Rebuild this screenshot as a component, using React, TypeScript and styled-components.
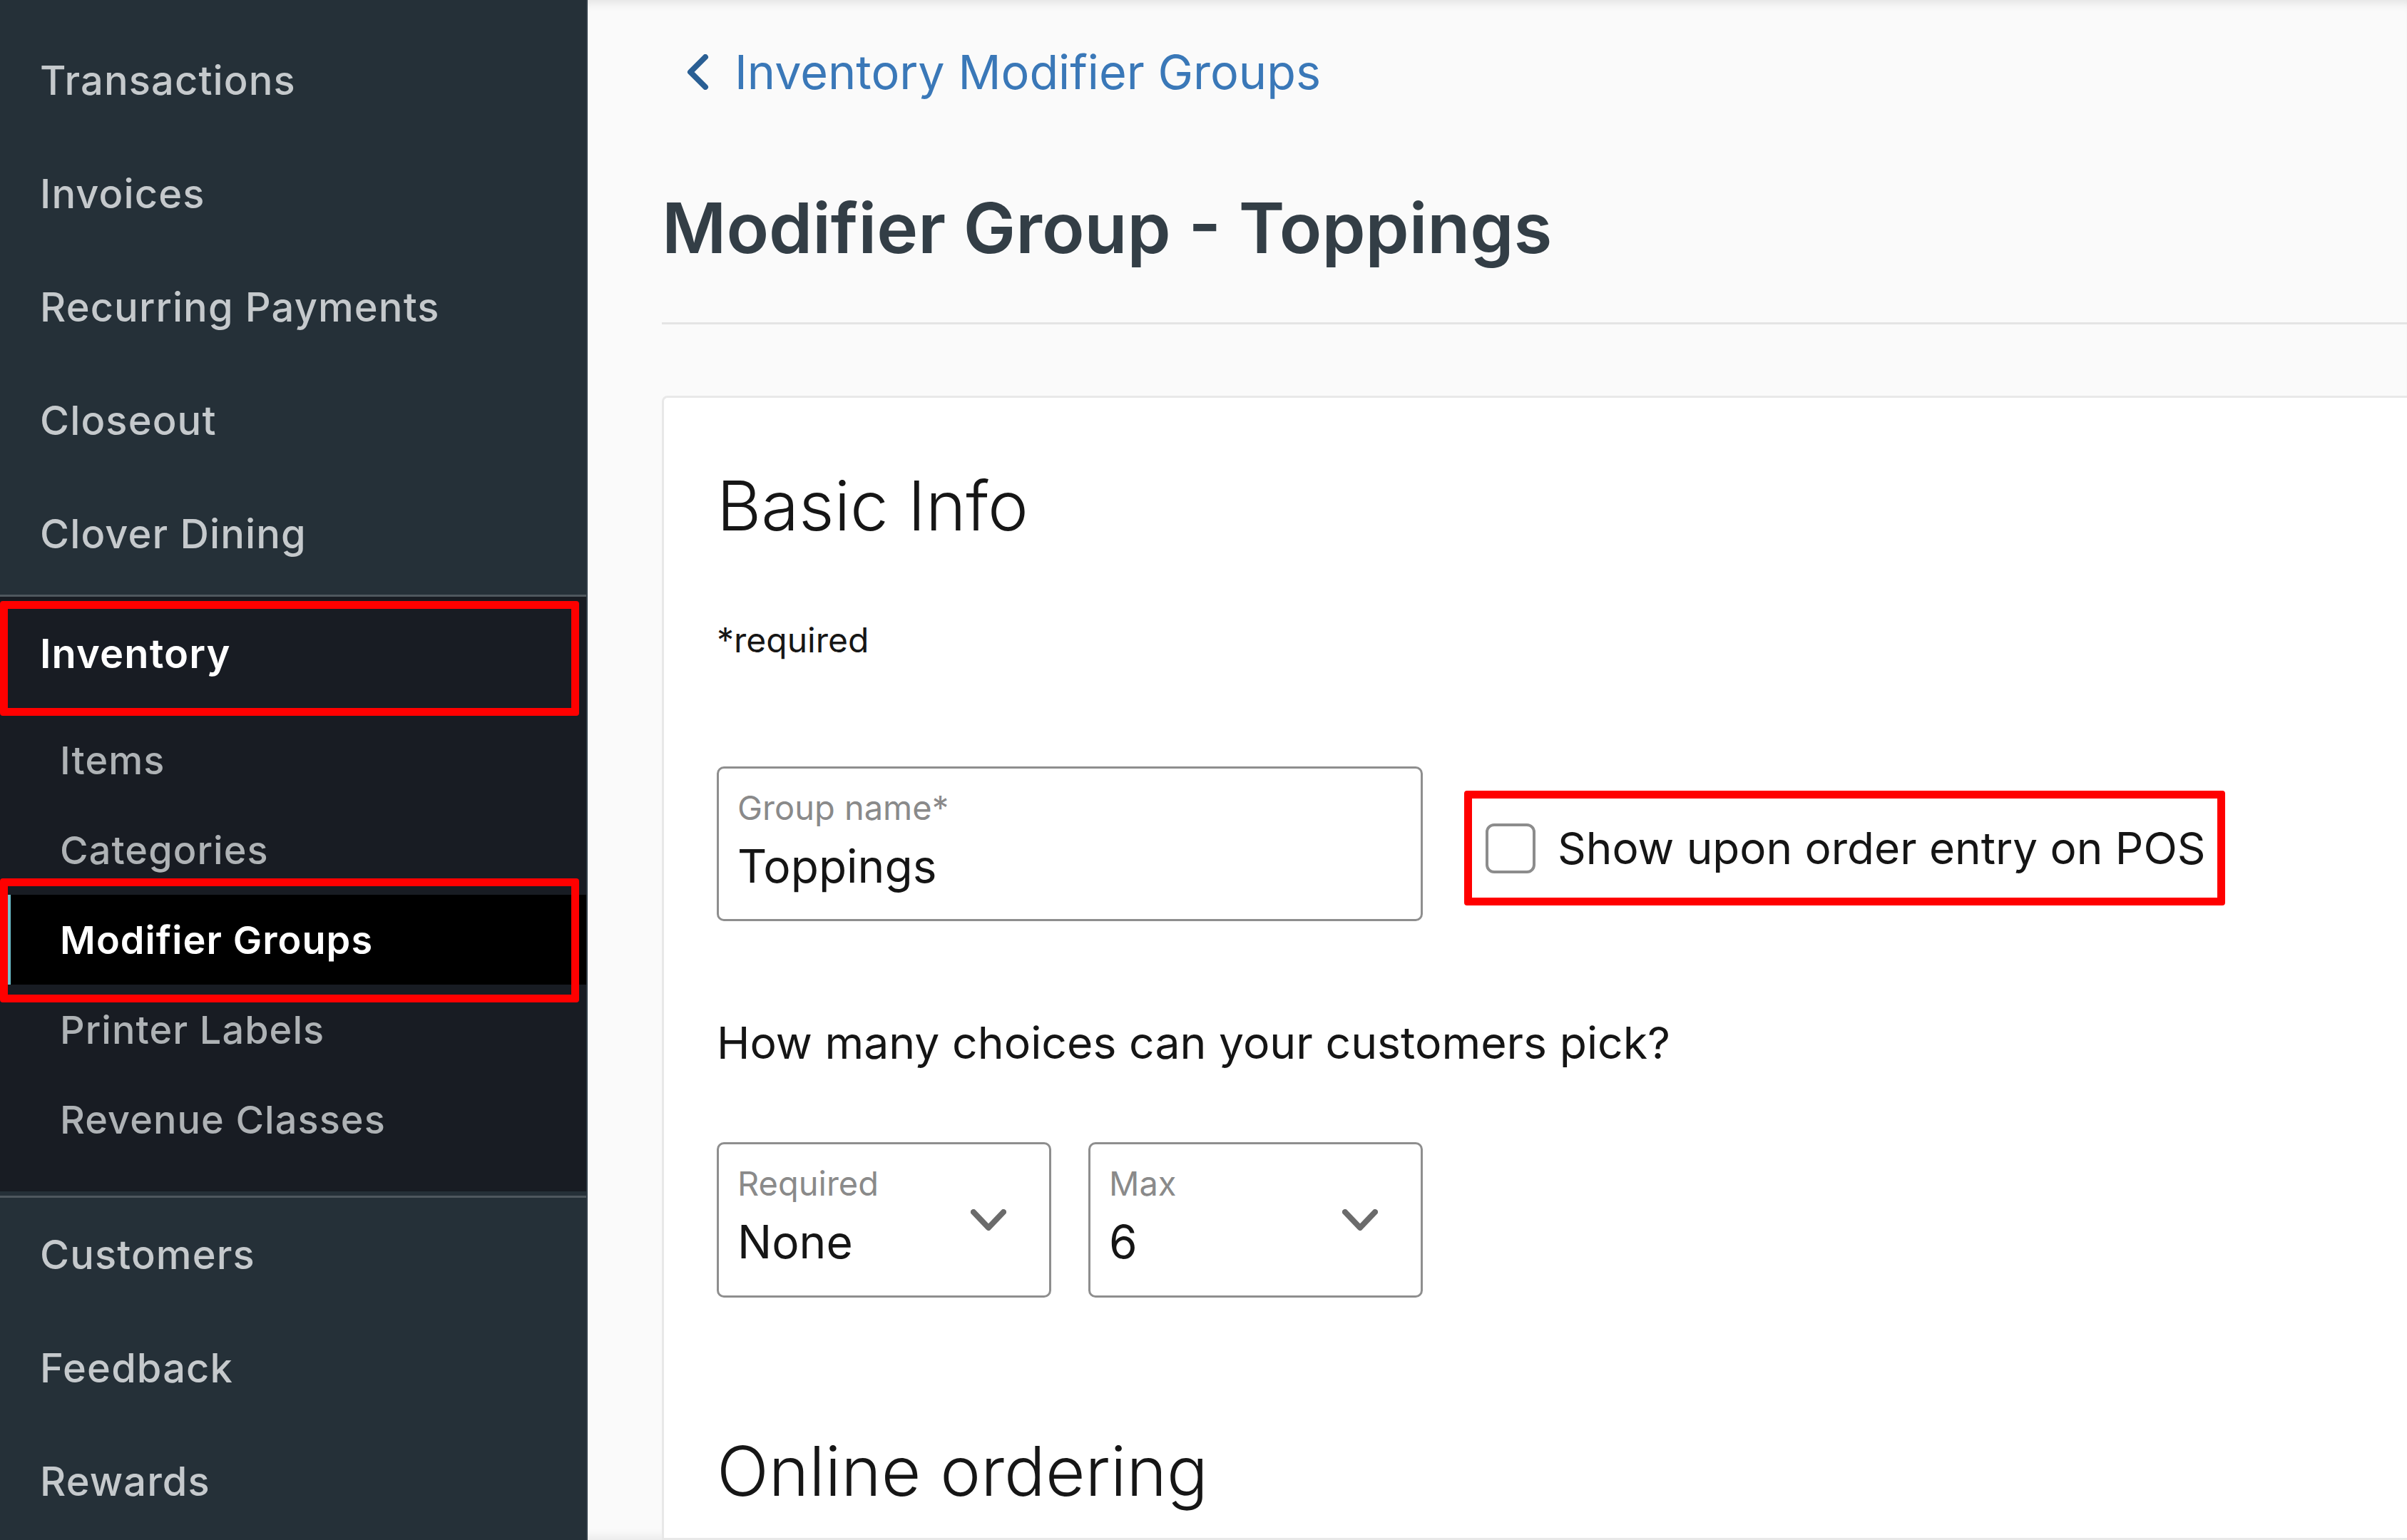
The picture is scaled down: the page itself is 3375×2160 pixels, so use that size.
import styled, { createGlobalStyle } from 'styled-components';

const GlobalStyle = createGlobalStyle`
  html, body {
    margin: 0;
    padding: 0;
  }
  body {
    font-family: Inter, "Noto Sans", sans-serif;
    background-color: #fafafa;
  }
  * {
    box-sizing: border-box;
  }
`;

const Page = styled.div`
  display: flex;
  width: 3375px;
  height: 2160px;
  overflow: hidden;
`;

const Sidebar = styled.nav`
  width: 824px;
  flex-shrink: 0;
  display: flex;
  flex-direction: column;
  background-color: #253038;
  border-right: 2px solid #34404a;
  padding-top: 33px;
`;

const NavGroup = styled.div<{ $top?: number }>`
  display: flex;
  flex-direction: column;
  padding-top: ${({ $top }) => $top ?? 0}px;
`;

const NavItem = styled.div`
  height: 159px;
  display: flex;
  align-items: center;
  padding-left: 56px;
  font-size: 56px;
  font-weight: 500;
  letter-spacing: 0.02em;
  color: #c5c9cc;
`;

const Divider = styled.div`
  margin-top: 6px;
  height: 3px;
  background-color: #4f585e;
`;

const SubSection = styled.div`
  background-color: #181c23;
  padding: 0 0 38px;
  display: flex;
  flex-direction: column;
`;

const SectionHeader = styled.div`
  position: relative;
  height: 160px;
  display: flex;
  align-items: center;
  padding-left: 56px;
  font-size: 56px;
  font-weight: 600;
  letter-spacing: 0.02em;
  color: #ffffff;

  &::after {
    content: '';
    position: absolute;
    top: 6px;
    bottom: -7px;
    left: 0;
    right: 10px;
    border: 11px solid #ff0000;
    border-radius: 4px;
  }
`;

const SubList = styled.div`
  padding-top: 6px;
  display: flex;
  flex-direction: column;
`;

const SubItem = styled.div<{ $active?: boolean }>`
  position: relative;
  height: 126px;
  display: flex;
  align-items: center;
  padding-left: ${({ $active }) => ($active ? '69px' : '84px')};
  margin-left: ${({ $active }) => ($active ? '11px' : '0')};
  font-size: 54px;
  font-weight: ${({ $active }) => ($active ? 600 : 500)};
  letter-spacing: 0.02em;
  color: ${({ $active }) => ($active ? '#ffffff' : '#aeb2b5')};
  background-color: ${({ $active }) => ($active ? '#000000' : 'transparent')};
  border-left: ${({ $active }) => ($active ? '4px solid #6fc3cf' : 'none')};

  ${({ $active }) =>
    $active &&
    `
    &::after {
      content: '';
      position: absolute;
      top: -23px;
      bottom: -25px;
      left: -15px;
      right: 10px;
      border: 11px solid #ff0000;
      border-radius: 4px;
    }
  `}
`;

const Main = styled.main`
  flex: 1;
  min-width: 0;
  padding-left: 104px;
  background-color: #fafafa;
  box-shadow: inset 0 14px 14px -10px rgba(0, 0, 0, 0.1), inset 0 -14px 14px -10px rgba(0, 0, 0, 0.08);
  display: flex;
  flex-direction: column;
`;

const Breadcrumb = styled.div`
  height: 202px;
  display: flex;
  align-items: center;
  gap: 36px;
  padding-left: 34px;
  font-size: 66.5px;
  font-weight: 400;
  color: #3a78b8;
`;

const Title = styled.h1`
  margin: 0;
  height: 234px;
  display: flex;
  align-items: center;
  font-size: 98px;
  font-weight: 600;
  color: #333e46;
`;

const HeaderRule = styled.div`
  margin-top: 16px;
  height: 3px;
  background-color: #e4e4e4;
`;

const Card = styled.section`
  margin-top: 100px;
  flex: 1;
  margin-right: -20px;
  background-color: #ffffff;
  border: 3px solid #e8e8e8;
  border-radius: 8px 0 0 0;
  padding: 96px 0 0 74px;
  display: flex;
  flex-direction: column;
`;

const SectionTitle = styled.h2<{ $gap?: number }>`
  margin: ${({ $gap }) => $gap ?? 0}px 0 0;
  font-size: 96px;
  line-height: 110px;
  font-weight: 300;
  color: #161616;
`;

const RequiredNote = styled.div`
  margin-top: 104px;
  font-size: 48px;
  line-height: 60px;
  color: #161616;
`;

const FieldRow = styled.div`
  margin-top: 147px;
  display: flex;
  align-items: center;
  gap: 58px;
`;

const Field = styled.div<{ $width: number }>`
  width: ${({ $width }) => $width}px;
  height: 217px;
  border: 3px solid #8e8e8e;
  border-radius: 10px;
  background-color: #ffffff;
  padding: 27px 30px 0 26px;
  display: flex;
  align-items: center;
`;

const FieldText = styled.div`
  flex: 1;
  display: flex;
  flex-direction: column;
  align-self: flex-start;
`;

const FieldLabel = styled.div`
  font-size: 47px;
  line-height: 56px;
  color: #8a8a8a;
`;

const FieldValue = styled.div`
  margin-top: 18px;
  font-size: 64px;
  line-height: 72px;
  color: #151515;
`;

const Highlight = styled.label`
  margin-top: 12px;
  border: 11px solid #ff0000;
  border-radius: 4px;
  height: 161px;
  display: flex;
  align-items: center;
  gap: 31px;
  padding: 0 16px 0 19px;
  font-size: 62px;
  color: #151515;
`;

const CheckBox = styled.span`
  width: 70px;
  height: 70px;
  border: 4px solid #8c8c8c;
  border-radius: 12px;
  background-color: #ffffff;
`;

const Question = styled.div`
  margin-top: 134px;
  font-size: 62.5px;
  line-height: 72px;
  color: #151515;
`;

const SelectRow = styled.div`
  margin-top: 104px;
  display: flex;
  gap: 52px;
`;

const SelectBox = styled(Field)`
  height: 218px;
  padding-right: 60px;
`;

const ChevronSlot = styled.span`
  display: flex;
  margin-top: -27px;
`;

const Chevron = ({ color, size }: { color: string; size: number }) => (
  <svg width={size} height={size * 0.62} viewBox="0 0 50 31" fill="none">
    <path d="M4 4 L25 26 L46 4" stroke={color} strokeWidth="8" strokeLinecap="round" strokeLinejoin="round" />
  </svg>
);

const BackChevron = () => (
  <svg width="32" height="50" viewBox="0 0 32 50" fill="none">
    <path d="M27 4 L6 25 L27 46" stroke="#2a5f94" strokeWidth="8" strokeLinecap="round" strokeLinejoin="round" />
  </svg>
);

const topItems = ['Transactions', 'Invoices', 'Recurring Payments', 'Closeout', 'Clover Dining'];
const inventoryItems = ['Items', 'Categories', 'Modifier Groups', 'Printer Labels', 'Revenue Classes'];
const bottomItems = ['Customers', 'Feedback', 'Rewards'];

const App = () => {
  return (
    <>
      <GlobalStyle />
      <Page>
        <Sidebar>
          <NavGroup>
            {topItems.map((item) => (
              <NavItem key={item}>{item}</NavItem>
            ))}
          </NavGroup>
          <Divider />
          <SubSection>
            <SectionHeader>Inventory</SectionHeader>
            <SubList>
              {inventoryItems.map((item) => (
                <SubItem key={item} $active={item === 'Modifier Groups'}>
                  {item}
                </SubItem>
              ))}
            </SubList>
          </SubSection>
          <Divider />
          <NavGroup $top={0}>
            {bottomItems.map((item) => (
              <NavItem key={item}>{item}</NavItem>
            ))}
          </NavGroup>
        </Sidebar>

        <Main>
          <Breadcrumb>
            <BackChevron />
            <span>Inventory Modifier Groups</span>
          </Breadcrumb>
          <Title>Modifier Group - Toppings</Title>
          <HeaderRule />

          <Card>
            <SectionTitle>Basic Info</SectionTitle>
            <RequiredNote>*required</RequiredNote>

            <FieldRow>
              <Field $width={990}>
                <FieldText>
                  <FieldLabel>Group name*</FieldLabel>
                  <FieldValue>Toppings</FieldValue>
                </FieldText>
              </Field>
              <Highlight>
                <CheckBox />
                Show upon order entry on POS
              </Highlight>
            </FieldRow>

            <Question>How many choices can your customers pick?</Question>

            <SelectRow>
              <SelectBox $width={469}>
                <FieldText>
                  <FieldLabel>Required</FieldLabel>
                  <FieldValue>None</FieldValue>
                </FieldText>
                <ChevronSlot>
                  <Chevron color="#6b6b6b" size={50} />
                </ChevronSlot>
              </SelectBox>
              <SelectBox $width={469}>
                <FieldText>
                  <FieldLabel>Max</FieldLabel>
                  <FieldValue>6</FieldValue>
                </FieldText>
                <ChevronSlot>
                  <Chevron color="#6b6b6b" size={50} />
                </ChevronSlot>
              </SelectBox>
            </SelectRow>

            <SectionTitle $gap={188}>Online ordering</SectionTitle>
          </Card>
        </Main>
      </Page>
    </>
  );
};

export default App;
